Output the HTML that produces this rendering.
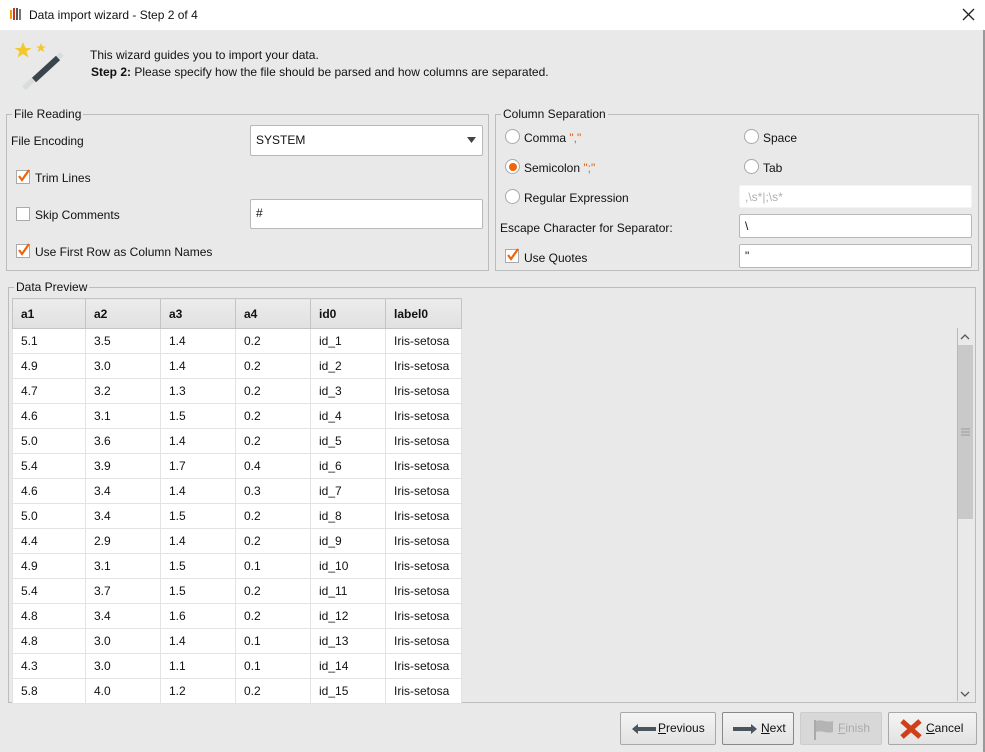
<!DOCTYPE html><html><head><style>
*{box-sizing:border-box;margin:0;padding:0}
body{width:985px;height:752px;background:#e8e9e8;font:12px "Liberation Sans",sans-serif;color:#111;position:relative;overflow:hidden}
.a{position:absolute;white-space:nowrap}
.grp{position:absolute;border:1px solid #bcbcbc}
.lg{position:absolute;top:-8px;left:5px;background:#e8e9e8;padding:0 2px;font-size:12px}
.fld{position:absolute;background:#fff;border:1px solid #b8b8b8;border-radius:2px;padding-left:5px;line-height:27px}
.cb{position:absolute;width:14px;height:14px;background:#fff;border:1px solid #aaa}
.rd{position:absolute;width:15px;height:15px;border-radius:50%;background:#fff;border:1px solid #a8a8a8}
.btn{position:absolute;top:712px;height:33px;border:1px solid #a8a8a8;border-radius:2px;background:linear-gradient(#f4f4f4,#e2e2e2);line-height:31px}
table{border-collapse:collapse;position:absolute;left:12px;top:298px;width:449px;table-layout:fixed}
td{height:25px;border:1px solid #e3e3e3;background:#fff;padding-left:8px}
th{height:30px;border:1px solid #c4c4c4;background:linear-gradient(#ececec,#e0e0e0);text-align:left;padding-left:8px;font-weight:bold}
.o{color:#e06010}
</style></head><body>
<div class="a" style="left:0;top:0;width:985px;height:30px;background:#fff"></div>
<svg class="a" style="left:9px;top:7px" width="14" height="14"><rect x="1" y="3" width="2" height="9" fill="#f0a000"/><rect x="4" y="1" width="2" height="12" fill="#d03020"/><rect x="7" y="1" width="2" height="12" fill="#555"/><rect x="10" y="2" width="2" height="11" fill="#777"/></svg>
<div class="a" style="left:29px;top:8px">Data import wizard - Step 2 of 4</div>
<svg class="a" style="left:962px;top:8px" width="13" height="13"><path d="M1 1L12 12M12 1L1 12" stroke="#222" stroke-width="1.3"/></svg>
<div class="a" style="left:983px;top:30px;width:2px;height:722px;background:#999"></div>
<svg class="a" style="left:14px;top:40px" width="52" height="52"><path d="M9 2l2.5 6h6l-5 3.5 2 6-5.5-3.5-5.5 3.5 2-6-5-3.5h6z" fill="#f2c82e"/><path d="M27 3l1.5 3.5h3.5l-3 2 1.2 3.5-3.2-2-3.2 2 1.2-3.5-3-2h3.5z" fill="#f2c82e"/><path d="M48 14L10 48" stroke="#d8dcdc" stroke-width="5"/><path d="M44 18L20 40" stroke="#3a444c" stroke-width="6"/></svg>
<div class="a" style="left:90px;top:48px">This wizard guides you to import your data.</div>
<div class="a" style="left:91px;top:65px"><b>Step 2:</b> Please specify how the file should be parsed and how columns are separated.</div>

<div class="grp" style="left:6px;top:114px;width:483px;height:157px"><span class="lg">File Reading</span></div>
<div class="a" style="left:11px;top:134px">File Encoding</div>
<div class="fld" style="left:250px;top:125px;width:233px;height:31px;line-height:29px">SYSTEM</div>
<svg class="a" style="left:467px;top:136px" width="10" height="8"><path d="M0 1h9l-4.5 6z" fill="#444"/></svg>
<div class="cb" style="left:16px;top:170px"></div><svg class="a" style="left:17px;top:169px" width="14" height="14"><path d="M2 7l3 4 7-10" stroke="#f0640a" stroke-width="2.2" fill="none"/></svg>
<div class="a" style="left:35px;top:171px">Trim Lines</div>
<div class="cb" style="left:16px;top:207px"></div>
<div class="a" style="left:35px;top:208px">Skip Comments</div>
<div class="fld" style="left:250px;top:199px;width:233px;height:30px">#</div>
<div class="cb" style="left:16px;top:244px"></div><svg class="a" style="left:17px;top:243px" width="14" height="14"><path d="M2 7l3 4 7-10" stroke="#f0640a" stroke-width="2.2" fill="none"/></svg>
<div class="a" style="left:35px;top:245px">Use First Row as Column Names</div>

<div class="grp" style="left:495px;top:114px;width:484px;height:157px"><span class="lg">Column Separation</span></div>
<div class="rd" style="left:505px;top:129px"></div><div class="a" style="left:524px;top:131px">Comma <span class="o">","</span></div>
<div class="rd" style="left:744px;top:129px"></div><div class="a" style="left:763px;top:131px">Space</div>
<div class="rd" style="left:505px;top:159px"></div><div class="a" style="left:509px;top:163px;width:8px;height:8px;border-radius:50%;background:#f0640a"></div><div class="a" style="left:524px;top:161px">Semicolon <span class="o">";"</span></div>
<div class="rd" style="left:744px;top:159px"></div><div class="a" style="left:763px;top:161px">Tab</div>
<div class="rd" style="left:505px;top:189px"></div><div class="a" style="left:524px;top:191px">Regular Expression</div>
<div class="fld" style="left:739px;top:185px;width:233px;height:23px;line-height:22px;border-color:#f4f4f4;color:#b0b0b0">,\s*|;\s*</div>
<div class="a" style="left:500px;top:221px">Escape Character for Separator:</div>
<div class="fld" style="left:739px;top:214px;width:233px;height:24px;line-height:22px">\</div>
<div class="cb" style="left:505px;top:249px"></div><svg class="a" style="left:506px;top:248px" width="14" height="14"><path d="M2 7l3 4 7-10" stroke="#f0640a" stroke-width="2.2" fill="none"/></svg>
<div class="a" style="left:524px;top:251px">Use Quotes</div>
<div class="fld" style="left:739px;top:244px;width:233px;height:24px;line-height:22px">"</div>

<div class="grp" style="left:8px;top:287px;width:968px;height:416px"><span class="lg">Data Preview</span></div>
<table>
<colgroup><col style="width:73px"><col style="width:75px"><col style="width:75px"><col style="width:75px"><col style="width:75px"><col style="width:76px"></colgroup>
<tr><th>a1</th><th>a2</th><th>a3</th><th>a4</th><th>id0</th><th>label0</th></tr>
<tr><td>5.1</td><td>3.5</td><td>1.4</td><td>0.2</td><td>id_1</td><td>Iris-setosa</td></tr>
<tr><td>4.9</td><td>3.0</td><td>1.4</td><td>0.2</td><td>id_2</td><td>Iris-setosa</td></tr>
<tr><td>4.7</td><td>3.2</td><td>1.3</td><td>0.2</td><td>id_3</td><td>Iris-setosa</td></tr>
<tr><td>4.6</td><td>3.1</td><td>1.5</td><td>0.2</td><td>id_4</td><td>Iris-setosa</td></tr>
<tr><td>5.0</td><td>3.6</td><td>1.4</td><td>0.2</td><td>id_5</td><td>Iris-setosa</td></tr>
<tr><td>5.4</td><td>3.9</td><td>1.7</td><td>0.4</td><td>id_6</td><td>Iris-setosa</td></tr>
<tr><td>4.6</td><td>3.4</td><td>1.4</td><td>0.3</td><td>id_7</td><td>Iris-setosa</td></tr>
<tr><td>5.0</td><td>3.4</td><td>1.5</td><td>0.2</td><td>id_8</td><td>Iris-setosa</td></tr>
<tr><td>4.4</td><td>2.9</td><td>1.4</td><td>0.2</td><td>id_9</td><td>Iris-setosa</td></tr>
<tr><td>4.9</td><td>3.1</td><td>1.5</td><td>0.1</td><td>id_10</td><td>Iris-setosa</td></tr>
<tr><td>5.4</td><td>3.7</td><td>1.5</td><td>0.2</td><td>id_11</td><td>Iris-setosa</td></tr>
<tr><td>4.8</td><td>3.4</td><td>1.6</td><td>0.2</td><td>id_12</td><td>Iris-setosa</td></tr>
<tr><td>4.8</td><td>3.0</td><td>1.4</td><td>0.1</td><td>id_13</td><td>Iris-setosa</td></tr>
<tr><td>4.3</td><td>3.0</td><td>1.1</td><td>0.1</td><td>id_14</td><td>Iris-setosa</td></tr>
<tr><td>5.8</td><td>4.0</td><td>1.2</td><td>0.2</td><td>id_15</td><td>Iris-setosa</td></tr>
</table>
<div class="a" style="left:957px;top:328px;width:1px;height:373px;background:#b8b8b8"></div>
<div class="a" style="left:958px;top:345px;width:15px;height:174px;background:#c8c9c8"></div>
<svg class="a" style="left:958px;top:330px" width="15" height="371"><path d="M3 9l4-4 4 4M3 362l4 4 4-4" stroke="#555" stroke-width="1.3" fill="none"/><path d="M3 99h9M3 102h9M3 105h9" stroke="#999"/></svg>

<div class="btn" style="left:620px;width:96px"><svg class="a" style="left:10px;top:10px" width="26" height="12"><path d="M1 6l6-5v3h18v4H7v3z" fill="#4a5560"/></svg><span class="a" style="left:37px"><u>P</u>revious</span></div>
<div class="btn" style="left:722px;width:72px;border-color:#888"><svg class="a" style="left:9px;top:10px" width="26" height="12"><path d="M25 6l-6-5v3H1v4h18v3z" fill="#4a5560"/></svg><span class="a" style="left:38px"><u>N</u>ext</span></div>
<div class="btn" style="left:800px;width:82px;background:#d8d8d8;border-color:#ccc;color:#aaa"><svg class="a" style="left:12px;top:5px" width="22" height="24"><path d="M2 2v20" stroke="#aaa" stroke-width="2"/><path d="M3 3c6-2 10 2 17 0v11c-7 2-11-2-17 0z" fill="#b4b4b4"/></svg><span class="a" style="left:37px"><u>F</u>inish</span></div>
<div class="btn" style="left:888px;width:89px"><svg class="a" style="left:10px;top:5px" width="24" height="22"><path d="M3 3L21 19M21 3L3 19" stroke="#d04018" stroke-width="5"/></svg><span class="a" style="left:37px"><u>C</u>ancel</span></div>
</body></html>
